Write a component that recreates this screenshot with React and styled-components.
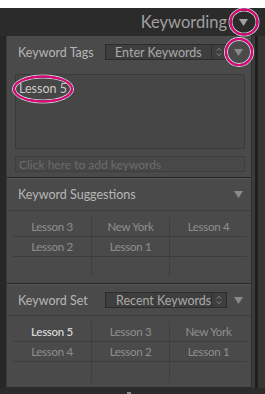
import React from "react";
import styled, { createGlobalStyle } from "styled-components";

const GlobalStyle = createGlobalStyle`
  html, body {
    margin: 0;
    padding: 0;
    background: #ffffff;
  }
  body {
    font-family: Lato, "Open Sans", "DejaVu Sans", sans-serif;
  }
`;

const Frame = styled.div`
  margin-top: 8px;
  width: 265px;
  height: 386px;
  background: #282828;
  display: flex;
  flex-direction: column;
`;

const Header = styled.div`
  height: 28px;
  background: #2b2b2b;
  display: flex;
  align-items: center;
  justify-content: flex-end;
  padding-right: 17px;
  gap: 12px;
`;

const HeaderTitle = styled.span`
  font-size: 16.5px;
  color: #a0a0a0;
`;

const Body = styled.div`
  display: flex;
  flex-direction: row;
`;

const Gap = styled.div`
  width: 6px;
  background: #272727;
`;

const Gutter = styled.div`
  width: 13px;
  background: linear-gradient(
    to right,
    #3b3b3b 0 3px,
    #1f1f1f 3px 6px,
    #363636 6px
  );
`;

const Panel = styled.div`
  width: 246px;
  box-sizing: border-box;
  background: #4a4a4a;
  border-left: 1px solid #3a3a3a;
  border-right: 1px solid #2e2e2e;
  border-bottom: 1px solid #2a2a2a;
  display: flex;
  flex-direction: column;
`;

const Section = styled.section`
  display: flex;
  flex-direction: column;
  border-top: ${(p) => (p.$first ? "none" : "1px solid #575757")};
  border-bottom: ${(p) => (p.$last ? "none" : "1px solid #262626")};
  padding-bottom: ${(p) => p.$pb}px;
`;

const SectionHeader = styled.div`
  height: ${(p) => p.$h}px;
  display: flex;
  align-items: center;
  padding: 0 8px 0 11px;
  border-bottom: ${(p) => (p.$line ? "1px solid #3e3e3e" : "none")};
`;

const Label = styled.span`
  flex: 1;
  font-size: 12.5px;
  color: #b6b6b6;
`;

const Select = styled.div`
  width: 122px;
  height: 16px;
  box-sizing: border-box;
  margin-right: 7px;
  background: #3e3e3e;
  border: 1px solid #2c2c2c;
  display: flex;
  align-items: center;
  font-size: 12.5px;
  color: #a9a9a9;
`;

const SelectText = styled.span`
  flex: 1;
  padding-left: ${(p) => p.$indent}px;
  white-space: nowrap;
`;

const Stepper = styled.div`
  width: 14px;
  height: 100%;
  border-left: 1px solid #2c2c2c;
  display: flex;
  align-items: center;
  justify-content: center;
`;

const Toggle = styled.div`
  position: relative;
  width: 9px;
  height: 9px;
  display: flex;
  align-items: center;
  justify-content: center;
`;

const Ring = styled.div`
  position: absolute;
  left: 50%;
  top: 50%;
  width: ${(p) => p.$w}px;
  height: ${(p) => p.$h}px;
  transform: translate(-50%, -50%);
  box-sizing: border-box;
  border: 2.5px solid #e4007c;
  border-radius: 50%;
  box-shadow: 0 0 0 1px rgba(255, 255, 255, 0.75),
    inset 0 0 0 1px rgba(255, 255, 255, 0.75);
  pointer-events: none;
`;

const TagsBox = styled.div`
  margin: 6px 0 0 8px;
  width: 230px;
  height: 75px;
  box-sizing: border-box;
  background: #464646;
  border: 1px solid #3a3a3a;
  padding: 2px 3px;
`;

const Tag = styled.span`
  position: relative;
  display: inline-block;
  font-size: 12.5px;
  color: #cacaca;
`;

const AddInput = styled.div`
  margin: 7px 0 0 8px;
  width: 230px;
  height: 16px;
  box-sizing: border-box;
  background: #484848;
  border: 1px solid #3d3d3d;
  display: flex;
  align-items: center;
  padding-left: 3px;
  font-size: 12px;
  color: #6c6c6c;
`;

const Grid = styled.div`
  margin: 6px 0 0 6px;
  width: 234px;
  display: grid;
  grid-template-columns: repeat(3, 1fr);
  grid-auto-rows: 20px;
`;

const Cell = styled.div`
  display: flex;
  align-items: center;
  justify-content: center;
  font-size: 11.5px;
  color: ${(p) => (p.$active ? "#d2d2d2" : "#8f8f8f")};
  font-weight: ${(p) => (p.$active ? 600 : 400)};
  letter-spacing: -0.3px;
  border-bottom: ${(p) => (p.$lastRow ? "none" : "1px solid #3d3d3d")};
  border-left: ${(p) => (p.$col === 0 ? "none" : "1px solid #3f3f3f")};
  box-sizing: border-box;
`;

const Footer = styled.div`
  flex: 1;
  display: flex;
  justify-content: flex-start;
  padding-left: 127px;
  padding-top: 4px;
  background: #2b2b2b;
`;

const Nub = styled.div`
  width: 4px;
  height: 2px;
  background: #8a8a8a;
`;

const Triangle = ({ color = "#8a8a8a", w = 9, h = 7 }) => (
  <svg width={w} height={h} viewBox="0 0 9 7">
    <polygon points="0,0 9,0 4.5,7" fill={color} />
  </svg>
);

const Arrows = () => (
  <svg width="6" height="10" viewBox="0 0 6 10">
    <polyline points="0.8,3.6 3,1.4 5.2,3.6" fill="none" stroke="#8a8a8a" strokeWidth="1" />
    <polyline points="0.8,6.4 3,8.6 5.2,6.4" fill="none" stroke="#8a8a8a" strokeWidth="1" />
  </svg>
);

const suggestions = [
  ["Lesson 3", "New York", "Lesson 4"],
  ["Lesson 2", "Lesson 1", ""],
  ["", "", ""],
];

const keywordSet = [
  ["Lesson 5", "Lesson 3", "New York"],
  ["Lesson 4", "Lesson 2", "Lesson 1"],
  ["", "", ""],
];

const KeywordGrid = ({ rows, active }) => (
  <Grid>
    {rows.map((row, r) =>
      row.map((word, c) => (
        <Cell
          key={`${r}-${c}`}
          $col={c}
          $lastRow={r === rows.length - 1}
          $active={active === word}
        >
          {word}
        </Cell>
      ))
    )}
  </Grid>
);

const App = () => {
  return (
    <>
      <GlobalStyle />
      <Frame>
        <Header>
          <HeaderTitle>Keywording</HeaderTitle>
          <Toggle>
            <Triangle color="#a3a3a3" w={11} h={9} />
            <Ring $w={29} $h={27} />
          </Toggle>
        </Header>
        <Body>
          <Gap />
          <Panel>
            <Section $first $pb={5}>
              <SectionHeader $h={32}>
                <Label>Keyword Tags</Label>
                <Select>
                  <SelectText $indent={9}>Enter Keywords</SelectText>
                  <Stepper>
                    <Arrows />
                  </Stepper>
                </Select>
                <Toggle>
                  <Triangle />
                  <Ring $w={28} $h={28} />
                </Toggle>
              </SectionHeader>
              <TagsBox>
                <Tag>
                  Lesson 5
                  <Ring $w={60} $h={27} />
                </Tag>
              </TagsBox>
              <AddInput>Click here to add keywords</AddInput>
            </Section>
            <Section $pb={6}>
              <SectionHeader $h={31} $line>
                <Label>Keyword Suggestions</Label>
                <Toggle>
                  <Triangle />
                </Toggle>
              </SectionHeader>
              <KeywordGrid rows={suggestions} />
            </Section>
            <Section $last $pb={5}>
              <SectionHeader $h={30} $line>
                <Label>Keyword Set</Label>
                <Select>
                  <SelectText $indent={10}>Recent Keywords</SelectText>
                  <Stepper>
                    <Arrows />
                  </Stepper>
                </Select>
                <Toggle>
                  <Triangle />
                </Toggle>
              </SectionHeader>
              <KeywordGrid rows={keywordSet} active="Lesson 5" />
            </Section>
          </Panel>
          <Gutter />
        </Body>
        <Footer>
          <Nub />
        </Footer>
      </Frame>
    </>
  );
};

export default App;
